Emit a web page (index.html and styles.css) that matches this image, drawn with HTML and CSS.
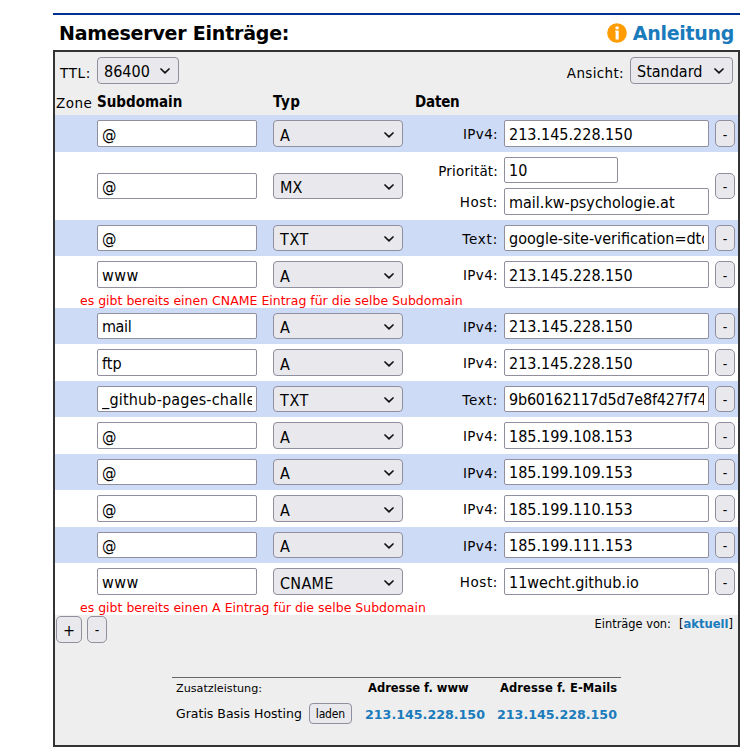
FILE: index.html
```
<!DOCTYPE html>
<html lang="de">
<head>
<meta charset="utf-8">
<title>Nameserver Einträge</title>
<link rel="stylesheet" href="styles.css">
</head>
<body>
<svg class="defs" width="0" height="0"><symbol id="chev" viewBox="0 0 10 6"><path d="M1 1l4 3.8L9 1" fill="none" stroke="#111" stroke-width="1.7" stroke-linecap="round"/></symbol></svg>
<main class="page">
  <header class="head">
    <h1 class="title">Nameserver Einträge:</h1>
    <a class="guide"><svg class="info" viewBox="0 0 20 20"><circle cx="10" cy="10" r="9.8" fill="#ff9c00"/><rect x="8.5" y="3.6" width="3.2" height="2.6" rx=".6" fill="#fff"/><path d="M8 7.4h3.7v9H8.6V8.6H8z" fill="#fff"/></svg><span>Anleitung</span></a>
  </header>
  <section class="panel">
    <div class="bar">
      <span class="lbl ttl">TTL:</span><div class="select sel-ttl"><span>86400</span><svg class="chev"><use href="#chev"/></svg></div>
      <span class="lbl view">Ansicht:</span><div class="select sel-view"><span>Standard</span><svg class="chev"><use href="#chev"/></svg></div>
    </div>
    <div class="cols"><span class="zone">Zone</span><b>Subdomain</b><b class="typ">Typ</b><b class="daten">Daten</b></div>

    <div class="row tall blue"><div class="field">@</div><div class="select"><span>A</span><svg class="chev"><use href="#chev"/></svg></div><span class="lbl">IPv4:</span><div class="field">213.145.228.150</div><div class="btn">-</div></div>
    <div class="row mx"><div class="field">@</div><div class="select"><span>MX</span><svg class="chev"><use href="#chev"/></svg></div><div class="labels"><span class="lbl prio">Priorität:</span><span class="lbl host">Host:</span></div><div class="fields"><div class="field small">10</div><div class="field big">mail.kw-psychologie.at</div></div><div class="btn">-</div></div>
    <div class="row blue"><div class="field">@</div><div class="select"><span class="txt">TXT</span><svg class="chev"><use href="#chev"/></svg></div><span class="lbl text">Text:</span><div class="field">google-site-verification=dtd</div><div class="btn">-</div></div>
    <div class="row tall"><div class="field www">www</div><div class="select"><span>A</span><svg class="chev"><use href="#chev"/></svg></div><span class="lbl">IPv4:</span><div class="field">213.145.228.150</div><div class="btn">-</div></div>
    <p class="error">es gibt bereits einen CNAME Eintrag für die selbe Subdomain</p>
    <div class="row blue"><div class="field mail">mail</div><div class="select"><span>A</span><svg class="chev"><use href="#chev"/></svg></div><span class="lbl">IPv4:</span><div class="field">213.145.228.150</div><div class="btn">-</div></div>
    <div class="row tall"><div class="field">ftp</div><div class="select"><span>A</span><svg class="chev"><use href="#chev"/></svg></div><span class="lbl">IPv4:</span><div class="field">213.145.228.150</div><div class="btn">-</div></div>
    <div class="row blue"><div class="field challenge">_github-pages-challe</div><div class="select"><span class="txt">TXT</span><svg class="chev"><use href="#chev"/></svg></div><span class="lbl text">Text:</span><div class="field hash">9b60162117d5d7e8f427f74</div><div class="btn">-</div></div>
    <div class="row tall"><div class="field">@</div><div class="select"><span>A</span><svg class="chev"><use href="#chev"/></svg></div><span class="lbl">IPv4:</span><div class="field">185.199.108.153</div><div class="btn">-</div></div>
    <div class="row blue"><div class="field">@</div><div class="select"><span>A</span><svg class="chev"><use href="#chev"/></svg></div><span class="lbl">IPv4:</span><div class="field">185.199.109.153</div><div class="btn">-</div></div>
    <div class="row tall"><div class="field">@</div><div class="select"><span>A</span><svg class="chev"><use href="#chev"/></svg></div><span class="lbl">IPv4:</span><div class="field">185.199.110.153</div><div class="btn">-</div></div>
    <div class="row blue"><div class="field">@</div><div class="select"><span>A</span><svg class="chev"><use href="#chev"/></svg></div><span class="lbl">IPv4:</span><div class="field">185.199.111.153</div><div class="btn">-</div></div>
    <div class="row tall"><div class="field www">www</div><div class="select"><span class="cname">CNAME</span><svg class="chev"><use href="#chev"/></svg></div><span class="lbl host">Host:</span><div class="field">11wecht.github.io</div><div class="btn">-</div></div>
    <p class="error">es gibt bereits einen A Eintrag für die selbe Subdomain</p>

    <div class="actions">
      <div class="btn plus">+</div><div class="btn">-</div>
      <div class="from"><span>Einträge von:</span><span>[<a>aktuell</a>]</span></div>
    </div>
    <div class="extra">
      <span>Zusatzleistung:</span><b class="hw">Adresse f. www</b><b class="hm">Adresse f. E-Mails</b>
      <div class="hosting"><span>Gratis Basis Hosting</span><div class="btn load">laden</div></div><a>213.145.228.150</a><a>213.145.228.150</a>
    </div>
  </section>
</main>
</body>
</html>
```
FILE: styles.css
```
* { box-sizing: border-box; }
body { margin: 0; background: #fff; color: #000; font-family: "DejaVu Sans", Verdana, sans-serif; }
.defs { display: block; }
.page { width: 687px; margin: 13px 0 0 53px; }
a { color: #1a7bbc; font-weight: 700; }

.head { display: flex; justify-content: space-between; height: 37px; border-top: 2px solid #003090; padding: 6px 6px 0; }
.title { margin: 0; font-size: 19px; line-height: 24px; letter-spacing: -0.22px; white-space: nowrap; }
.guide { display: flex; gap: 6px; font-size: 19px; line-height: 24px; letter-spacing: -0.3px; }
.info { width: 20px; height: 20px; margin-top: 2px; }

.panel { height: 697px; background: #eee; border: 2px solid #333; }
.bar { display: flex; height: 39px; padding: 5px 5px 0; }
.lbl { font-size: 13.5px; letter-spacing: 0.35px; line-height: 28px; white-space: nowrap; }
.bar .lbl { line-height: 32px; }
.ttl { width: 37px; letter-spacing: 0.65px; }
.view { margin-left: auto; margin-right: 6px; }
.prio { letter-spacing: 0.15px; }
.text { letter-spacing: 0.8px; }
.host { letter-spacing: 0.6px; }

.select, .field, .btn { height: 26px; border: 1px solid #8f8f9d; font: 16px/25px "DejaVu Sans Condensed", Tahoma, sans-serif; white-space: nowrap; }
.select { display: flex; justify-content: space-between; align-items: center; width: 130px; padding: 1px 8px 0 6px; border-radius: 4px; background: #e9e9ed; }
.select span { line-height: 22px; padding-top: 2px; }
.bar .select { height: 27px; }
.chev { flex: none; width: 10px; height: 6px; }
.bar .sel-ttl { width: 82px; }
.bar .sel-view { width: 103px; }
.txt { letter-spacing: 0.6px; }
.cname { letter-spacing: 0.3px; }
.field { padding: 0 4px; border-radius: 2px; background: #fff; overflow: clip; overflow-clip-margin: content-box; }
.www { letter-spacing: 0.5px; }
.mail { letter-spacing: -0.4px; }
.challenge { letter-spacing: 0.18px; }
.hash { letter-spacing: -0.2px; }
.btn { width: 20px; border-radius: 5px; background: #e9e9ed; text-align: center; font-size: 14px; line-height: 27px; }

.cols { display: grid; grid-template-columns: 41px 176px 142px 1fr; height: 24px; padding-left: 1px; font: 15px/22px "DejaVu Sans Condensed", Tahoma, sans-serif; }
.zone { font: 13.5px/24px "DejaVu Sans", Verdana, sans-serif; letter-spacing: 0.5px; }
.typ { letter-spacing: 0.5px; }
.daten { letter-spacing: -0.2px; }

.row { display: grid; grid-template-columns: 176px 130px 95px 6px 205px 6px 20px; height: 36px; padding: 5px 0 0 42px; background: #fff; }
.row > :nth-child(1) { grid-column: 1; width: 160px; }
.row > :nth-child(2) { grid-column: 2; }
.row > :nth-child(3) { grid-column: 3; text-align: right; }
.row > :nth-child(4) { grid-column: 5; }
.row > :nth-child(5) { grid-column: 7; }
.tall { height: 37px; }
.tall .select, .tall .field, .tall .btn { height: 27px; line-height: 27px; }
.tall .select { padding-top: 2px; }
.tall .btn { line-height: 29px; }
.blue { background: #cedbf7; }
.mx { height: 68px; }
.mx > .field, .mx > .select, .mx > .btn { margin-top: 16px; }
.mx .labels { display: flex; flex-direction: column; gap: 3px; }
.fields { display: flex; flex-direction: column; gap: 5px; }
.small { width: 114px; }
.mx .big { height: 27px; line-height: 27px; }
.error { height: 15px; margin: 0; padding-left: 25px; background: #fff; color: #f00; font-size: 12.5px; line-height: 15px; white-space: nowrap; }

.actions { display: flex; gap: 5px; height: 62px; padding: 1px 5px 0 1px; }
.actions .btn { height: 27px; line-height: 27px; }
.actions .plus { width: 26px; font-size: 16px; }
.from { display: flex; gap: 8px; margin-left: auto; font-size: 11.4px; line-height: 17px; }
.from a { font-size: 11.6px; }

.extra { display: grid; grid-template-columns: 189px 132px 120px; grid-template-rows: 21px 31px; width: 449px; margin-left: 117px; padding-left: 4px; border-top: 1px solid #666; font-size: 11.2px; line-height: 21px; white-space: nowrap; }
.hw, .hm { padding-left: 3px; font-size: 11.5px; }
.hm { letter-spacing: 0.1px; }
.hosting { display: flex; gap: 7px; font-size: 12.5px; line-height: 30px; }
.hosting .load { width: 43px; height: 21px; margin-top: 4px; border-radius: 4px; font-size: 12px; line-height: 20px; letter-spacing: -0.2px; }
.extra a { font-size: 12.65px; line-height: 31px; }
```
